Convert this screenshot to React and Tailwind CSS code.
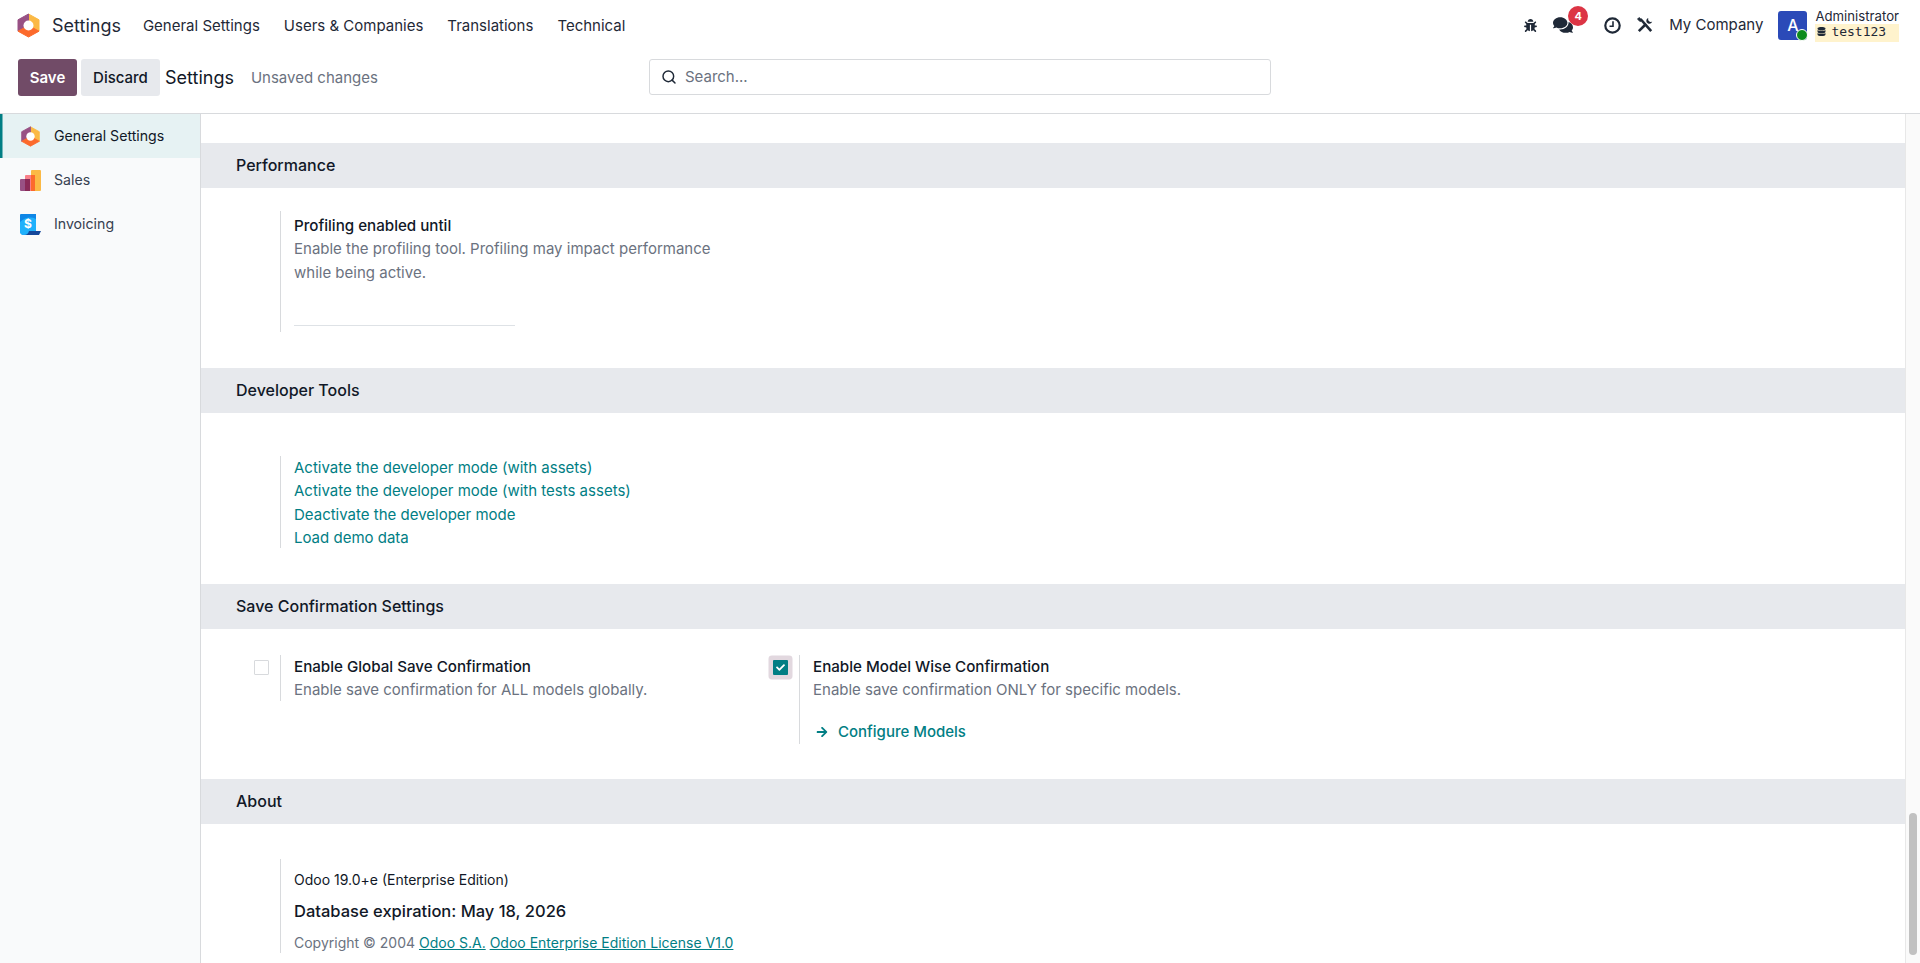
import { FaBug, FaComments, FaDatabase, FaArrowRight, FaCheck } from "react-icons/fa";
import { Search } from "lucide-react";

const OdooLogo = ({ size = 25 }) => (
  <svg width={size} height={size} viewBox="0 0 25 25">
    <path d="M12.5 1 L23 6.8 V18.2 L12.5 12.5 Z" fill="#fbb945" stroke="#fbb945" strokeLinejoin="round" />
    <path d="M12.5 1 L2 6.8 V18.2 L12.5 12.5 Z" fill="#985184" stroke="#985184" strokeLinejoin="round" />
    <path d="M2 18.2 L12.5 24 L23 18.2 L12.5 12.5 Z" fill="#fc6a2c" stroke="#fc6a2c" strokeLinejoin="round" />
    <circle cx="12.5" cy="12.5" r="5" fill="#fff" />
  </svg>
);

const SalesIcon = () => (
  <svg width="21" height="21" viewBox="0 0 21 21">
    <rect x="11" y="0" width="10" height="21" rx="1" fill="#fbb945" />
    <rect x="5" y="5" width="10" height="16" rx="1" fill="#f9808a" />
    <rect x="0" y="9" width="10" height="12" rx="1" fill="#985184" />
    <rect x="5" y="9" width="5" height="12" fill="#8a2a58" />
    <rect x="11" y="5" width="4" height="16" fill="#fc6a2c" />
  </svg>
);

const InvoicingIcon = () => (
  <svg width="21" height="21" viewBox="0 0 21 21">
    <path d="M1 0 H16 V21 H4 A4 4 0 0 1 0 17 V1 A1 1 0 0 1 1 0 Z" fill="#0f86e6" />
    <path d="M0 8 Q8 1 16 5 V21 H4 A4 4 0 0 1 0 17 Z" fill="#20b1fb" />
    <path d="M9 17 H21 L19 21 H4 Q8 21 9 17 Z" fill="#15479a" />
    <text x="8" y="13.5" textAnchor="middle" fontSize="12" fontWeight="700" fill="#fff" fontFamily="Inter, sans-serif">$</text>
  </svg>
);

const ClockIcon = () => (
  <svg width="17" height="17" viewBox="0 0 17 17" fill="none" stroke="#1f2937" strokeWidth="2.2">
    <circle cx="8.5" cy="8.5" r="7.2" />
    <path d="M9 4.2 V9.2 H5.5" strokeWidth="1.6" />
  </svg>
);

const ToolsIcon = () => (
  <svg width="16" height="16" viewBox="0 0 16 16" fill="none" stroke="#1f2937" strokeWidth="2.6">
    <path d="M1.8 14.2 L9 7" />
    <path d="M3.5 2 L14.2 14.2" />
    <path d="M2 0.6 L0.6 2 L3 4.6 L4.8 3 Z" fill="#1f2937" strokeWidth="1" />
    <path d="M11.2 1 A3.4 3.4 0 0 0 9.6 5.2 L11 6.4 A3.4 3.4 0 0 0 15.2 4.8 L13 5 L11.2 3.2 Z" fill="#1f2937" stroke="none" />
  </svg>
);

const SectionHeader = ({ children }) => (
  <div className="h-[45px] bg-[#e7e9ed] pl-[35px] pt-[1px] flex items-center text-[16px] font-medium text-[#111827]">{children}</div>
);

const SideItem = ({ icon, label, active }) => (
  <div className={`h-[44px] flex items-center gap-[13px] pl-[20px] ${active ? "bg-[#e6f2f3] shadow-[inset_2.5px_0_0_#017e84] text-[#111827]" : "text-[#374151]"}`}>
    {icon}
    <span>{label}</span>
  </div>
);

export default function App() {
  return (
    <div className="h-[963px] overflow-hidden flex flex-col bg-white text-[15px] text-[#111827] font-['Inter',sans-serif]">
      {/* Top navbar */}
      <div className="h-[50px] flex items-center pl-[16px] pr-[21px]">
        <OdooLogo />
        <span className="ml-[11px] text-[18px] text-[#1f2937]">Settings</span>
        <div className="ml-[22px] pt-[2px] flex gap-[24px] text-[#1f2937]">
          <span>General Settings</span>
          <span>Users &amp; Companies</span>
          <span>Translations</span>
          <span>Technical</span>
        </div>
        <div className="ml-auto flex items-center text-[#1f2937]">
          <FaBug className="text-[13px]" />
          <div className="relative ml-[16px] mr-[31px]">
            <FaComments className="text-[20px]" />
            <span className="absolute -top-[9px] left-[15px] w-[20px] h-[20px] rounded-full bg-[#dc3545] text-white text-[11px] font-bold flex items-center justify-center">4</span>
          </div>
          <ClockIcon />
          <span className="ml-[16px]"><ToolsIcon /></span>
          <span className="ml-[16px] pt-[1px]">My Company</span>
          <div className="relative ml-[15px] w-[29px] h-[29px] rounded-[3px] bg-[#2b4ab8] text-white text-[16px] font-medium flex items-center justify-center">
            A
            <span className="absolute -right-[1px] -bottom-[1px] w-[12px] h-[12px] rounded-full bg-[#0b8a1d] border border-white"></span>
          </div>
          <div className="ml-[8px] flex flex-col">
            <span className="text-[13.2px] leading-[15px]">Administrator</span>
            <span className="h-[18px] pb-[2px] bg-[#fff3cd] flex items-center gap-[5px] pl-[2px] text-[13px] font-['DejaVu_Sans_Mono',monospace]">
              <FaDatabase className="text-[9px]" />
              test123
            </span>
          </div>
        </div>
      </div>

      {/* Control panel */}
      <div className="h-[64px] flex items-start pt-[9px] pl-[18px] border-b border-[#d8dadd]">
        <button className="w-[59px] h-[37px] pt-[1px] rounded-[3px] bg-[#714b67] text-white font-semibold">Save</button>
        <button className="ml-[4px] w-[79px] h-[37px] pt-[1px] rounded-[3px] bg-[#e7e9ed] font-medium">Discard</button>
        <span className="ml-[5px] h-[37px] flex items-center text-[18px]">Settings</span>
        <span className="ml-[17px] h-[37px] pt-[1px] flex items-center text-[#6b7280]">Unsaved changes</span>
        <div className="ml-[271px] w-[622px] h-[36px] border border-[#d8dadd] rounded-[3px] flex items-center pl-[11px] gap-[8px] text-[#6b7280]">
          <Search size={16} strokeWidth={2.2} className="text-[#1f2937]" />
          <span className="pt-[1px]">Search...</span>
        </div>
      </div>

      <div className="flex-1 flex min-h-0">
        {/* Sidebar */}
        <div className="w-[201px] shrink-0 bg-[#f9fafb] border-r border-[#d8dadd] text-[14.15px]">
          <SideItem active icon={<OdooLogo size={21} />} label="General Settings" />
          <SideItem icon={<SalesIcon />} label="Sales" />
          <SideItem icon={<InvoicingIcon />} label="Invoicing" />
        </div>

        {/* Content */}
        <div className="flex-1 min-w-0 pt-[29px] leading-[23.4px]">
          <SectionHeader>Performance</SectionHeader>
          <div className="h-[180px] pl-[79px] pt-[23px]">
            <div className="w-[440px] h-[121px] border-l border-[#d8dadd] pl-[13px] pt-[3px]">
              <div className="font-medium text-[15.15px]">Profiling enabled until</div>
              <div className="text-[#6b7280]">Enable the profiling tool. Profiling may impact performance while being active.</div>
              <div className="mt-[41px] w-[221px] border-b border-[#dee2e6]"></div>
            </div>
          </div>

          <SectionHeader>Developer Tools</SectionHeader>
          <div className="h-[171px] pl-[79px] pt-[44px]">
            <div className="border-l border-[#d8dadd] pl-[13px] text-[#017e84] h-[92px]">
              <div className="-mt-[1px]">Activate the developer mode (with assets)</div>
              <div>Activate the developer mode (with tests assets)</div>
              <div>Deactivate the developer mode</div>
              <div>Load demo data</div>
            </div>
          </div>

          <SectionHeader>Save Confirmation Settings</SectionHeader>
          <div className="h-[150px] flex pl-[53px] pt-[27px]">
            <div className="w-[519px] flex">
              <div className="w-[15px] h-[15px] mt-[4px] border border-[#d8dadd] rounded-[1px]"></div>
              <div className="ml-[11px] h-[46px] border-l border-[#d8dadd] pl-[13px] -mt-[1px]">
                <div className="font-medium text-[15.15px]">Enable Global Save Confirmation</div>
                <div className="text-[#6b7280]">Enable save confirmation for ALL models globally.</div>
              </div>
            </div>
            <div className="flex">
              <div className="w-[15px] h-[15px] mt-[4px] rounded-[1px] bg-[#017e84] text-white text-[9px] flex items-center justify-center shadow-[0_0_0_4.5px_#e2d8df]">
                <FaCheck />
              </div>
              <div className="ml-[11px] h-[89px] border-l border-[#d8dadd] pl-[13px] -mt-[1px]">
                <div className="font-medium text-[15.15px]">Enable Model Wise Confirmation</div>
                <div className="text-[#6b7280]">Enable save confirmation ONLY for specific models.</div>
                <div className="mt-[18px] flex items-center gap-[10px] text-[#017e84] font-medium pl-[3px]">
                  <FaArrowRight className="text-[12px]" />
                  Configure Models
                </div>
              </div>
            </div>
          </div>

          <SectionHeader>About</SectionHeader>
          <div className="pl-[79px] pt-[35px]">
            <div className="border-l border-[#d8dadd] pl-[13px] h-[94px] pt-[9px]">
              <div className="text-[14px]">Odoo 19.0+e (Enterprise Edition)</div>
              <div className="mt-[9px] text-[16.5px] font-medium">Database expiration: May 18, 2026</div>
              <div className="mt-[7px] text-[14px] text-[#6b7280]">
                Copyright © 2004 <span className="text-[#017e84] underline">Odoo S.A.</span> <span className="text-[#017e84] underline">Odoo Enterprise Edition License V1.0</span>
              </div>
            </div>
          </div>
        </div>

        {/* Scrollbar */}
        <div className="w-[15px] shrink-0 bg-[#fafafa] border-l border-[#e8e8e8] pl-[3px] pt-[699px]">
          <div className="w-[8px] h-[142px] rounded-[4px] bg-[#c1c1c1]"></div>
        </div>
      </div>
    </div>
  );
}
